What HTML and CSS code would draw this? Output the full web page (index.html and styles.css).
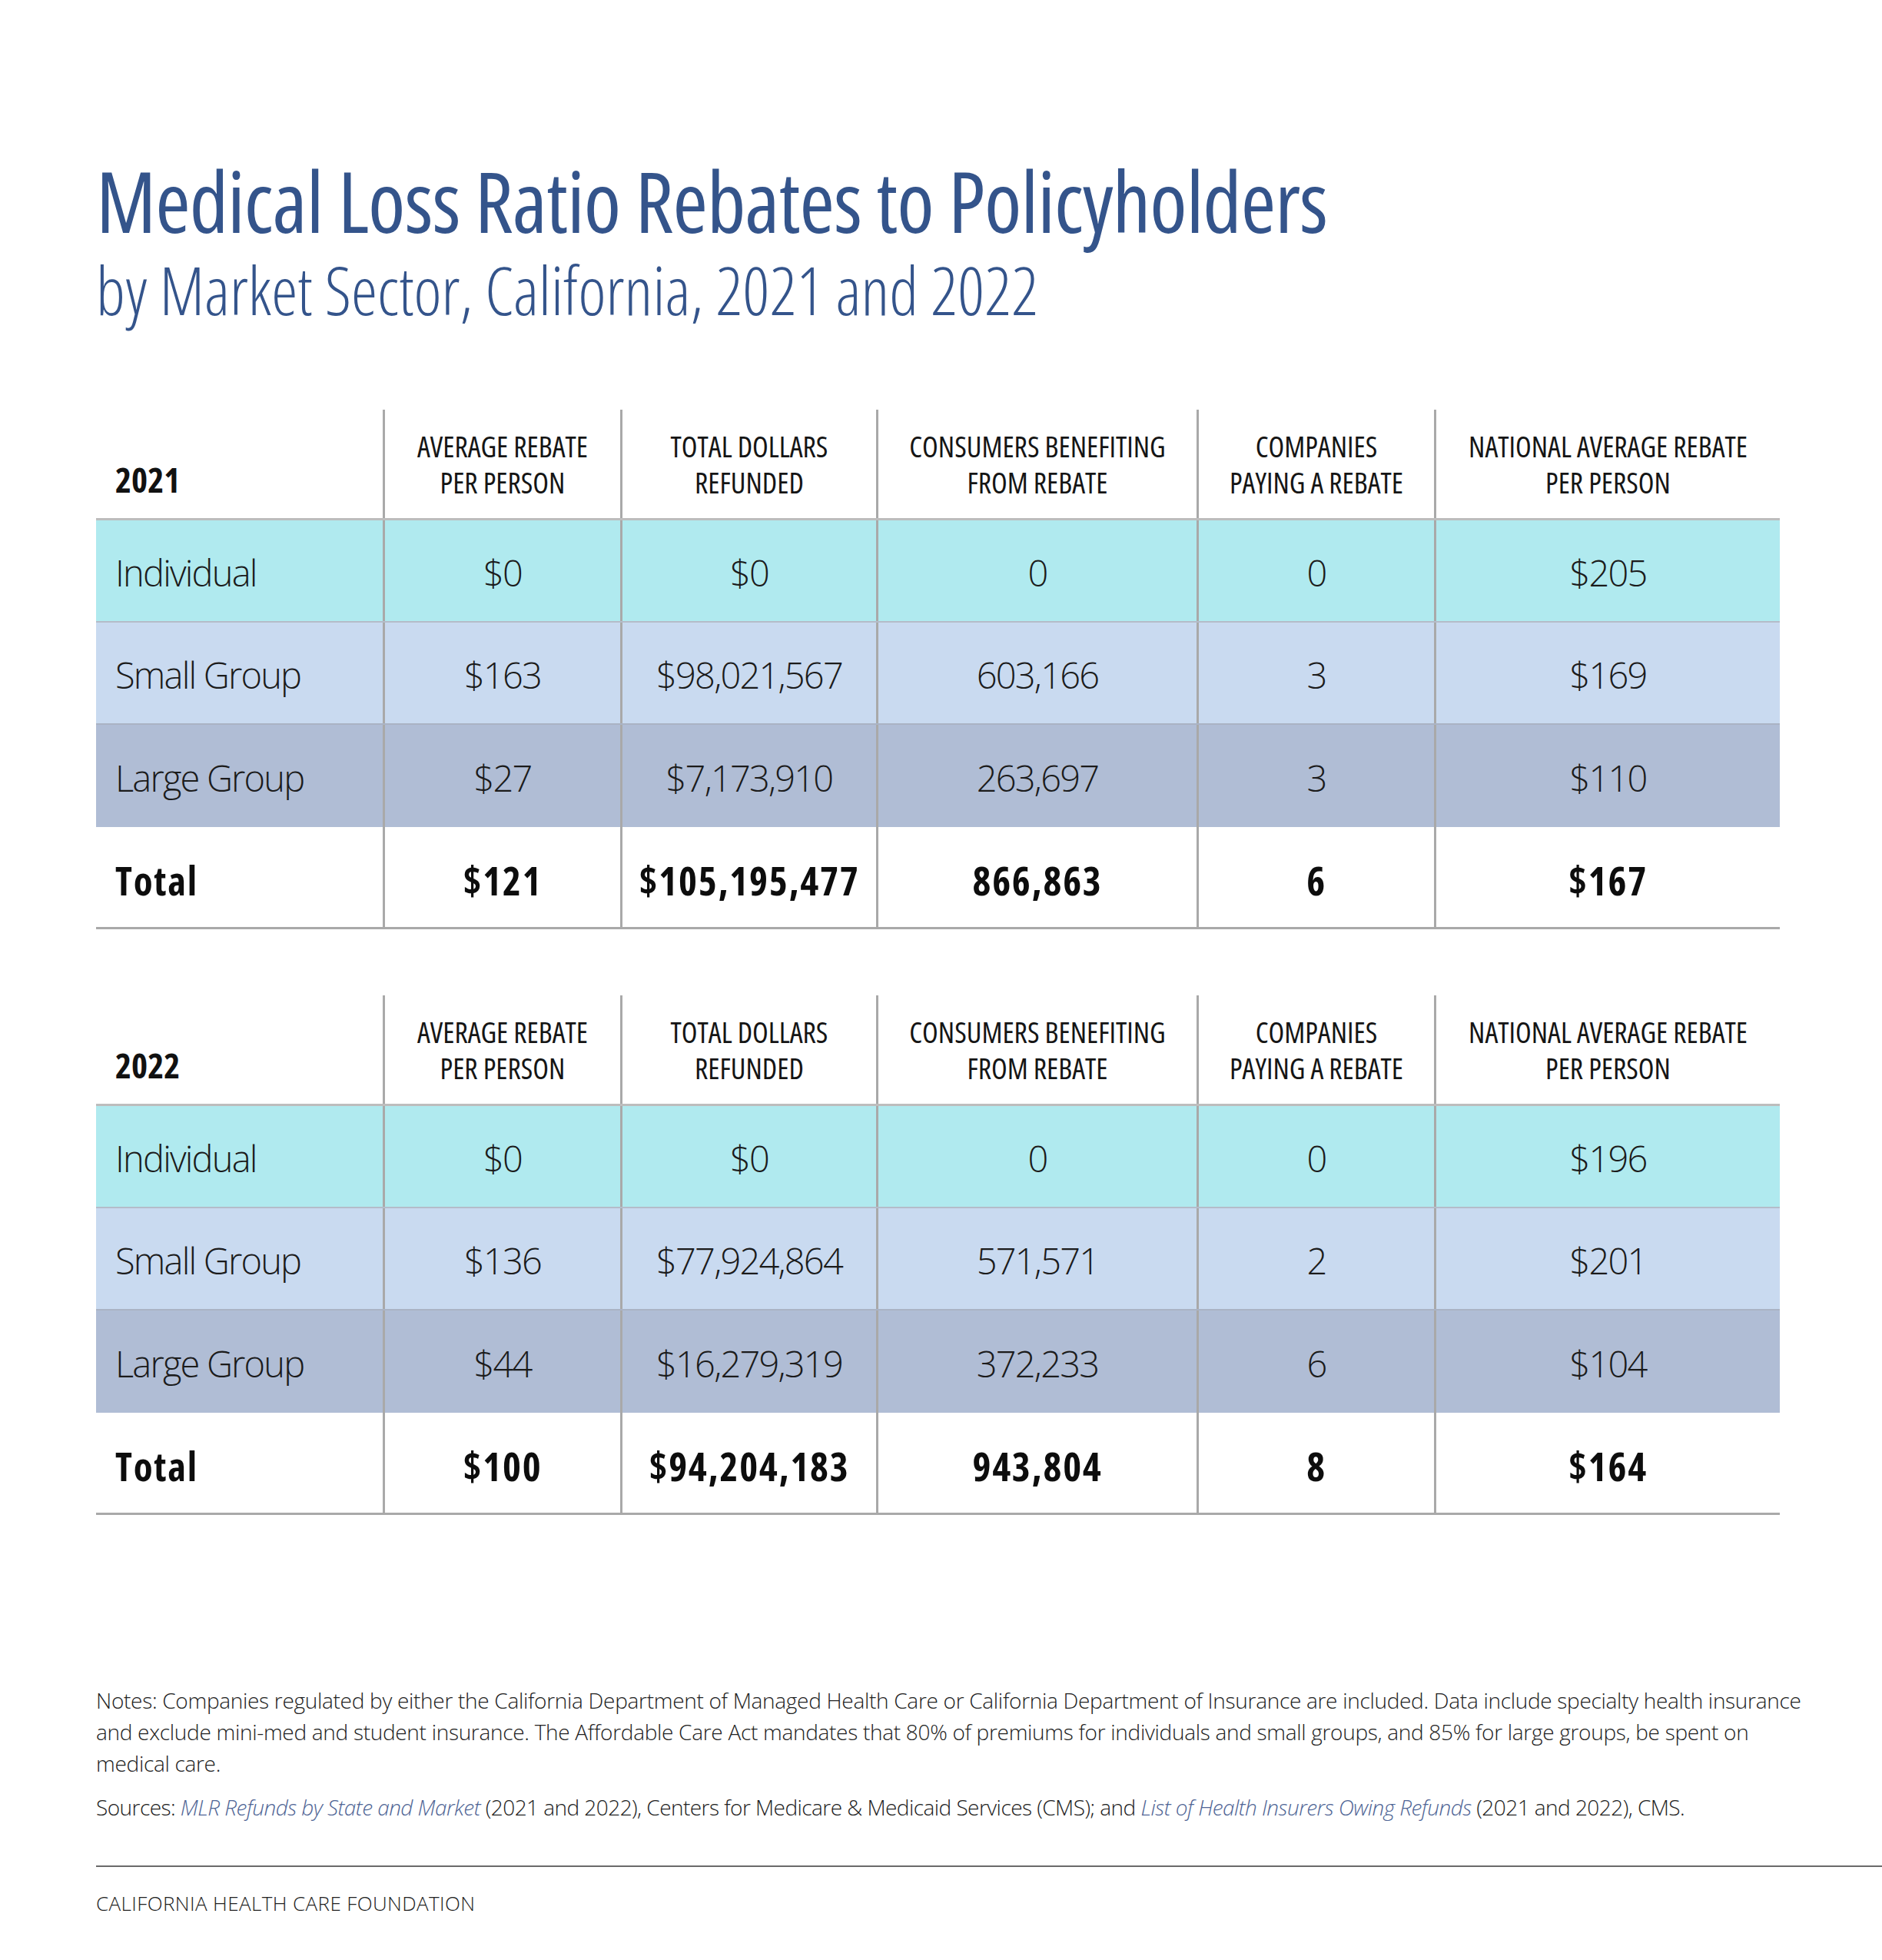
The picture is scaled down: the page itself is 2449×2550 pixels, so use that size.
FILE: index.html
```html
<!DOCTYPE html>
<html lang="en">
<head>
<meta charset="utf-8">
<title>Medical Loss Ratio Rebates to Policyholders</title>
<link rel="stylesheet" href="styles.css">
</head>
<body>
<main class="page">
  <header class="heading">
    <h1 class="title">Medical Loss Ratio Rebates to Policyholders</h1>
    <p class="subtitle">by Market Sector, California, 2021 and 2022</p>
  </header>

  <section class="rebates rebates-first">
    <div class="row row-head">
      <div class="cell cell-year">2021</div>
      <div class="cell cell-head">AVERAGE REBATE<br>PER PERSON</div>
      <div class="cell cell-head">TOTAL DOLLARS<br>REFUNDED</div>
      <div class="cell cell-head">CONSUMERS BENEFITING<br>FROM REBATE</div>
      <div class="cell cell-head">COMPANIES<br>PAYING A REBATE</div>
      <div class="cell cell-head">NATIONAL AVERAGE REBATE<br>PER PERSON</div>
    </div>
    <div class="row row-individual">
      <div class="cell cell-label">Individual</div>
      <div class="cell">$0</div>
      <div class="cell">$0</div>
      <div class="cell">0</div>
      <div class="cell">0</div>
      <div class="cell">$205</div>
    </div>
    <div class="row row-small">
      <div class="cell cell-label">Small Group</div>
      <div class="cell">$163</div>
      <div class="cell">$98,021,567</div>
      <div class="cell">603,166</div>
      <div class="cell">3</div>
      <div class="cell">$169</div>
    </div>
    <div class="row row-large">
      <div class="cell cell-label">Large Group</div>
      <div class="cell">$27</div>
      <div class="cell">$7,173,910</div>
      <div class="cell">263,697</div>
      <div class="cell">3</div>
      <div class="cell">$110</div>
    </div>
    <div class="row row-total">
      <div class="cell cell-label">Total</div>
      <div class="cell">$121</div>
      <div class="cell">$105,195,477</div>
      <div class="cell">866,863</div>
      <div class="cell">6</div>
      <div class="cell">$167</div>
    </div>
  </section>

  <section class="rebates">
    <div class="row row-head">
      <div class="cell cell-year">2022</div>
      <div class="cell cell-head">AVERAGE REBATE<br>PER PERSON</div>
      <div class="cell cell-head">TOTAL DOLLARS<br>REFUNDED</div>
      <div class="cell cell-head">CONSUMERS BENEFITING<br>FROM REBATE</div>
      <div class="cell cell-head">COMPANIES<br>PAYING A REBATE</div>
      <div class="cell cell-head">NATIONAL AVERAGE REBATE<br>PER PERSON</div>
    </div>
    <div class="row row-individual">
      <div class="cell cell-label">Individual</div>
      <div class="cell">$0</div>
      <div class="cell">$0</div>
      <div class="cell">0</div>
      <div class="cell">0</div>
      <div class="cell">$196</div>
    </div>
    <div class="row row-small">
      <div class="cell cell-label">Small Group</div>
      <div class="cell">$136</div>
      <div class="cell">$77,924,864</div>
      <div class="cell">571,571</div>
      <div class="cell">2</div>
      <div class="cell">$201</div>
    </div>
    <div class="row row-large">
      <div class="cell cell-label">Large Group</div>
      <div class="cell">$44</div>
      <div class="cell">$16,279,319</div>
      <div class="cell">372,233</div>
      <div class="cell">6</div>
      <div class="cell">$104</div>
    </div>
    <div class="row row-total">
      <div class="cell cell-label">Total</div>
      <div class="cell">$100</div>
      <div class="cell">$94,204,183</div>
      <div class="cell">943,804</div>
      <div class="cell">8</div>
      <div class="cell">$164</div>
    </div>
  </section>

  <section class="notes">
    <p class="note">Notes: Companies regulated by either the California Department of Managed Health Care or California Department of Insurance are included. Data include specialty health insurance<br>and exclude mini-med and student insurance. The Affordable Care Act mandates that 80% of premiums for individuals and small groups, and 85% for large groups, be spent on<br>medical care.</p>
    <p class="sources">Sources: <em class="src-link">MLR Refunds by State and Market</em> (2021 and 2022), Centers for Medicare &amp; Medicaid Services (CMS); and <em class="src-link">List of Health Insurers Owing Refunds</em> (2021 and 2022), CMS.</p>
  </section>

  <footer class="footer">
    <div class="footer-rule"></div>
    <p class="footer-name">CALIFORNIA HEALTH CARE FOUNDATION</p>
  </footer>
</main>
</body>
</html>
```
FILE: styles.css
```css
html, body {
  margin: 0;
  padding: 0;
  background: #ffffff;
}

body {
  font-family: "Open Sans", "Noto Sans", sans-serif;
  color: #161616;
}

.page {
  width: 2449px;
  min-height: 2550px;
  padding-left: 125px;
  box-sizing: border-box;
}

/* Heading */
.heading {
  padding-top: 204px;
}

.title {
  margin: 0;
  font-size: 110px;
  line-height: 112px;
  font-weight: 500;
  font-stretch: 75%;
  letter-spacing: -1px;
  color: #34548b;
  white-space: nowrap;
}

.subtitle {
  margin: 11px 0 0 0;
  font-size: 86px;
  line-height: 100px;
  font-weight: 300;
  font-stretch: 75%;
  color: #34548b;
  white-space: nowrap;
}

/* Tables */
.rebates {
  width: 2191px;
  margin-top: 106px;
}

.rebates-first {
  margin-bottom: 86px;
}

.rebates + .rebates {
  margin-top: 0;
}

.row {
  display: grid;
  grid-template-columns: 373px 309px 333px 417px 309px 450px;
  box-sizing: border-box;
}

.cell {
  display: flex;
  align-items: center;
  justify-content: center;
  text-align: center;
  box-sizing: border-box;
  white-space: nowrap;
}

.cell + .cell {
  border-left: 3px solid #a9a9a9;
}

.row-head {
  height: 144px;
  border-bottom: 3px solid #bdbdbd;
}

.row-head .cell {
  align-items: flex-end;
  padding-bottom: 23px;
}

.cell-head {
  font-size: 38px;
  line-height: 47px;
  font-weight: 400;
  font-stretch: 75%;
  color: #151515;
}

.cell-year {
  justify-content: flex-start;
  padding-left: 25px;
  font-size: 45px;
  line-height: 47px;
  font-weight: 700;
  font-stretch: 75%;
  color: #111111;
}

.row-head .cell-year {
  padding-bottom: 27px;
}

.row-individual,
.row-small,
.row-large {
  height: 133px;
  font-size: 47px;
  line-height: 60px;
  font-weight: 300;
  font-stretch: 100%;
  letter-spacing: -1.8px;
  color: #1b1b1b;
}

.row-individual .cell,
.row-small .cell,
.row-large .cell {
  padding-top: 4px;
}

.row-individual {
  background: #b0eaef;
  border-bottom: 2px solid #b4bcc9;
}

.row-small {
  background: #c9daf0;
  border-bottom: 2px solid #aab3c4;
}

.row-large {
  background: #b0bdd5;
}

.row-total {
  height: 133px;
  border-bottom: 3px solid #a9a9a9;
  font-size: 51px;
  line-height: 60px;
  font-weight: 700;
  font-stretch: 75%;
  letter-spacing: 1.8px;
  color: #0d0d0d;
}

.row-total .cell {
  padding-top: 8px;
}

.cell-label {
  justify-content: flex-start;
  padding-left: 25px;
}

/* Notes */
.notes {
  margin-top: 221px;
  width: 2300px;
}

.note,
.sources {
  margin: 0;
  font-size: 28px;
  line-height: 41px;
  font-weight: 300;
  font-stretch: 100%;
  letter-spacing: -0.3px;
  color: #222222;
  white-space: nowrap;
}

.sources {
  margin-top: 16px;
  letter-spacing: -0.55px;
}

.src-link {
  font-style: italic;
  color: #4f6595;
}

/* Footer */
.footer {
  margin-top: 55px;
}

.footer-rule {
  height: 2px;
  background: #6a6a6a;
}

.footer-name {
  margin: 29px 0 0 0;
  font-size: 26px;
  line-height: 36px;
  font-weight: 300;
  font-stretch: 100%;
  letter-spacing: 0.4px;
  color: #222222;
}
```
